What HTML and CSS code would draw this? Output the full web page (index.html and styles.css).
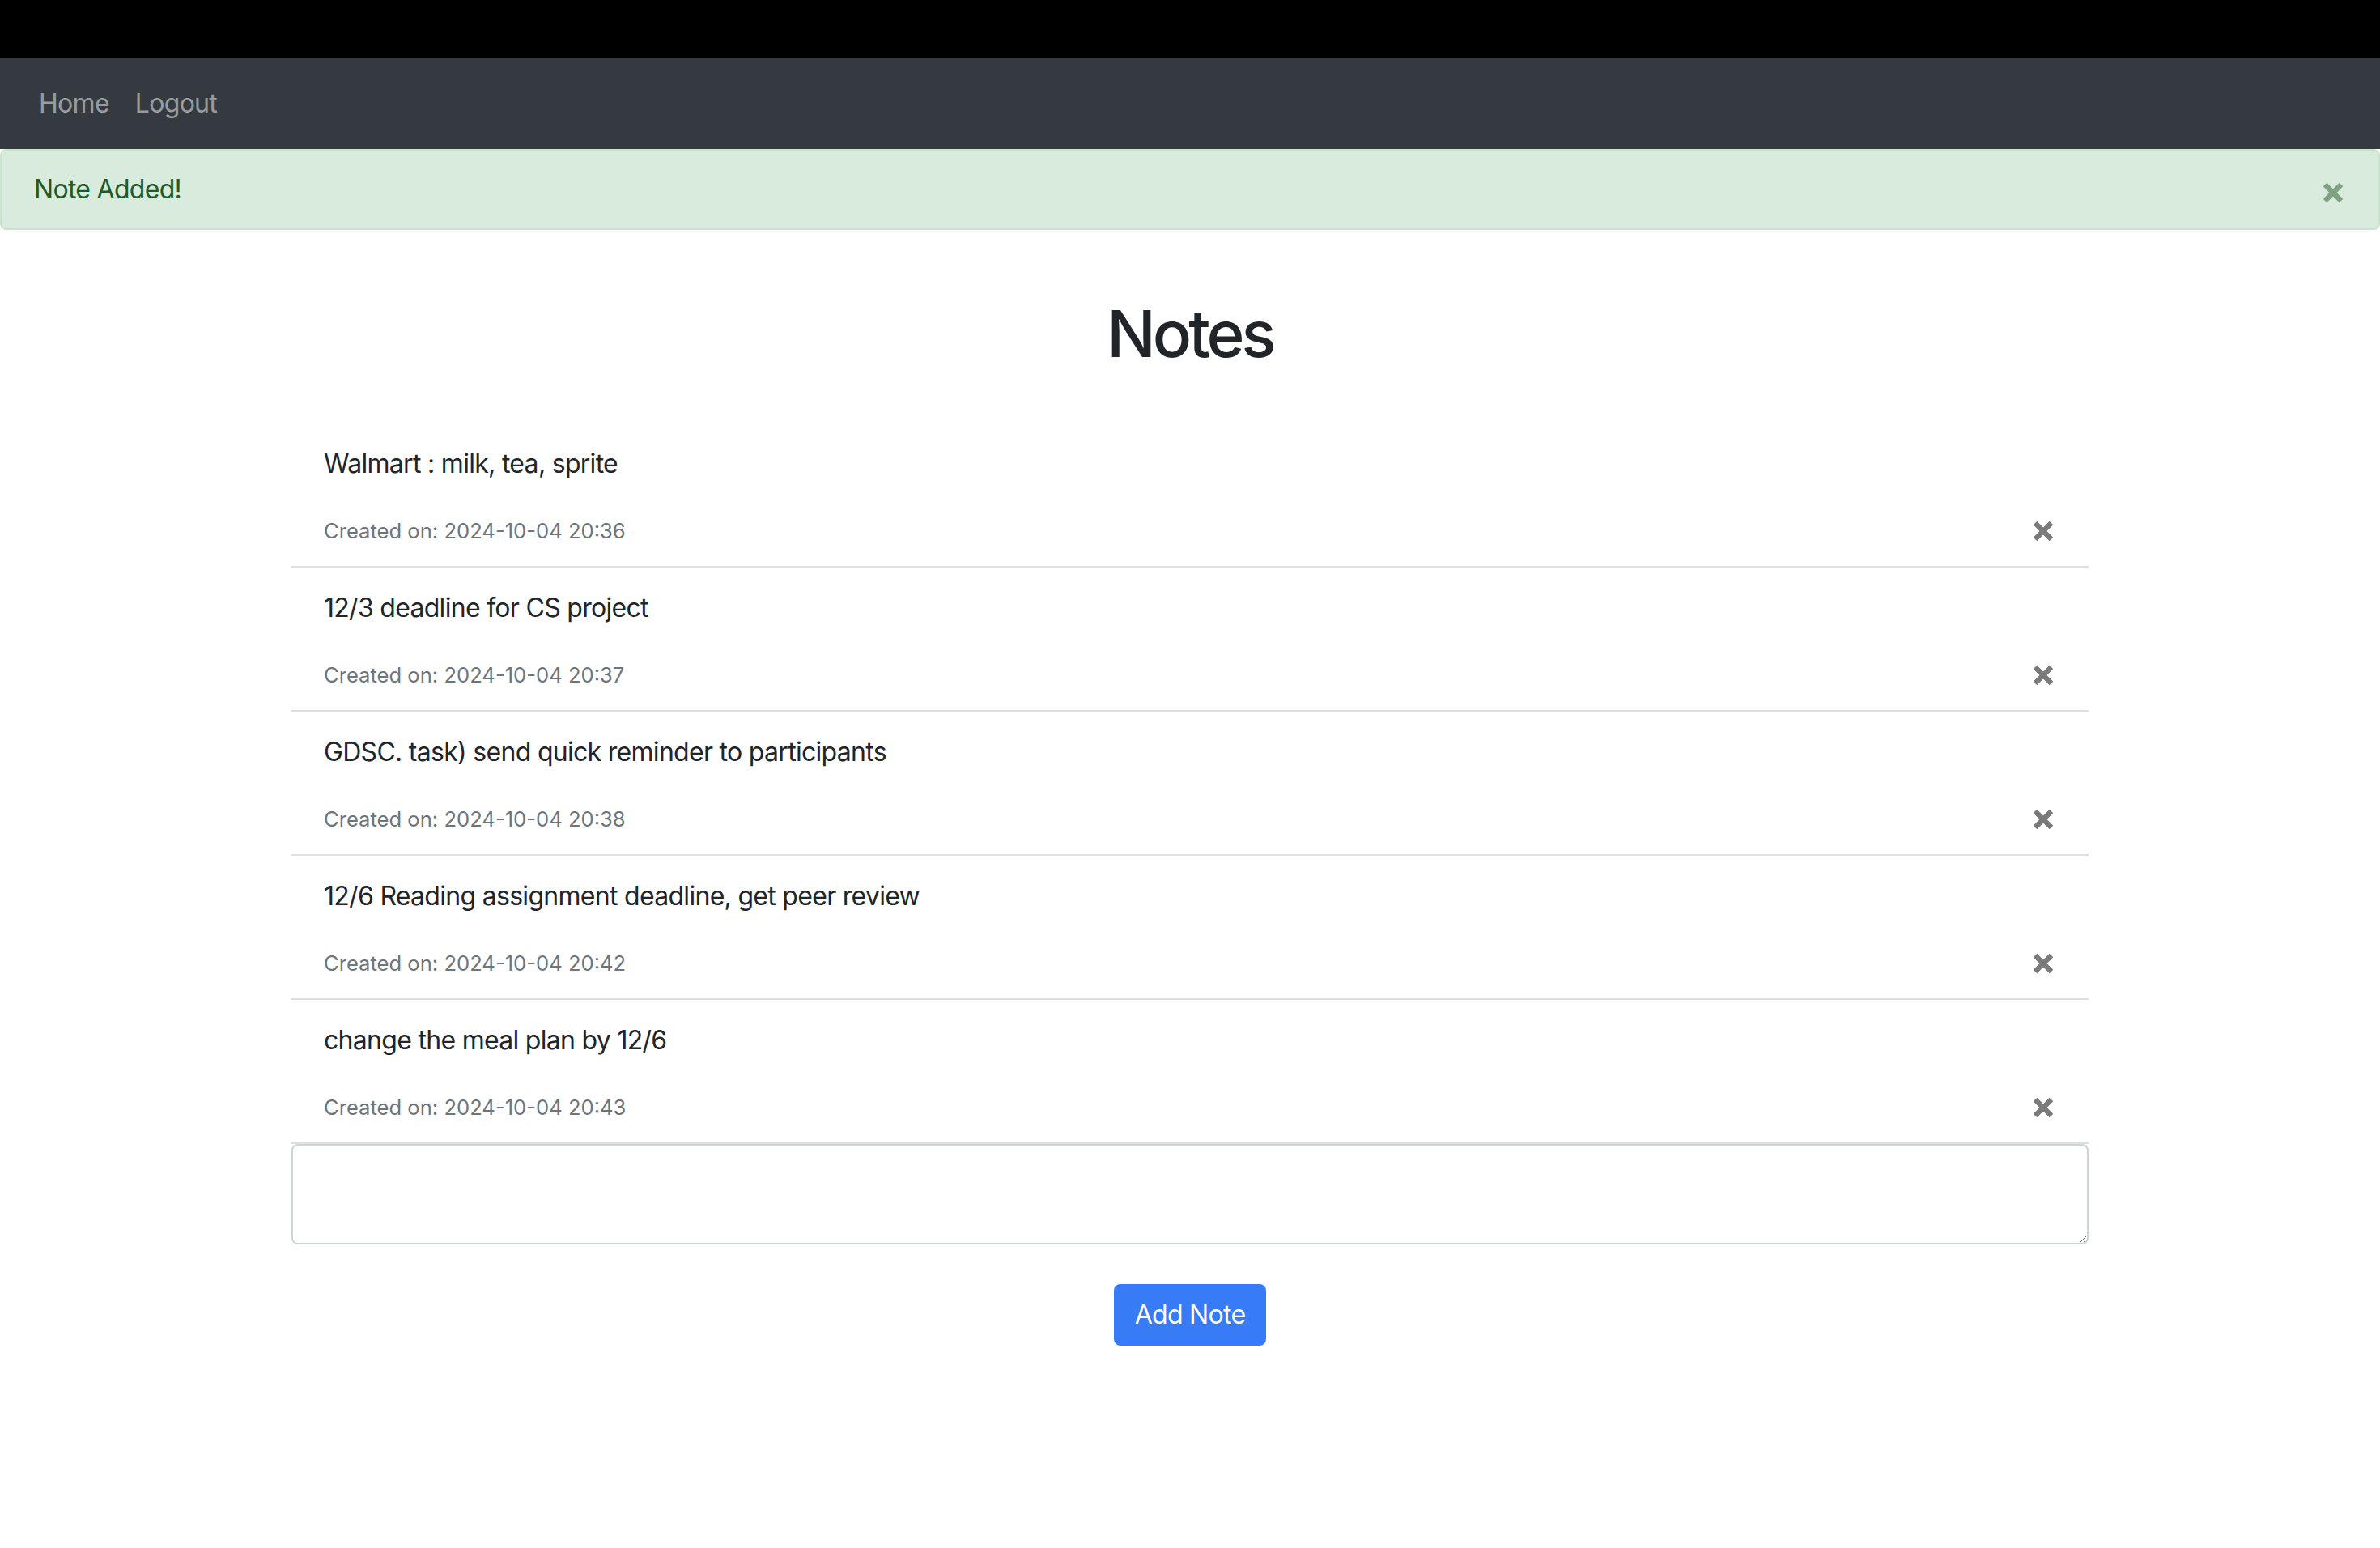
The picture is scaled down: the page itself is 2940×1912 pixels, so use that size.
FILE: index.html
```html
<!DOCTYPE html>
<html lang="en">
<head>
<meta charset="utf-8">
<title>Notes</title>
<link rel="stylesheet" href="styles.css">
</head>
<body>
<div class="topbar"></div>
<nav class="navbar">
  <a class="nav-link" href="#">Home</a>
  <a class="nav-link" href="#">Logout</a>
</nav>
<div class="alert">
  <span class="alert-text">Note Added!</span>
  <button class="close alert-close" type="button" aria-label="Close">
    <svg width="26" height="26" viewBox="0 0 26 26"><path d="M3 3 L23 23 M23 3 L3 23" stroke="currentColor" stroke-width="6.5" stroke-linecap="butt" fill="none"/></svg>
  </button>
</div>
<main class="container">
  <h1 class="title">Notes</h1>
  <ul class="notes">
    <li class="note">
      <div class="note-body"><div class="note-text">Walmart : milk, tea, sprite</div><small class="note-date">Created on: 2024-10-04 20:36</small></div>
      <button class="close" type="button" aria-label="Delete"><svg width="26" height="26" viewBox="0 0 26 26"><path d="M3 3 L23 23 M23 3 L3 23" stroke="currentColor" stroke-width="6.5" fill="none"/></svg></button>
    </li>
    <li class="note">
      <div class="note-body"><div class="note-text">12/3 deadline for CS project</div><small class="note-date">Created on: 2024-10-04 20:37</small></div>
      <button class="close" type="button" aria-label="Delete"><svg width="26" height="26" viewBox="0 0 26 26"><path d="M3 3 L23 23 M23 3 L3 23" stroke="currentColor" stroke-width="6.5" fill="none"/></svg></button>
    </li>
    <li class="note">
      <div class="note-body"><div class="note-text">GDSC. task) send quick reminder to participants</div><small class="note-date">Created on: 2024-10-04 20:38</small></div>
      <button class="close" type="button" aria-label="Delete"><svg width="26" height="26" viewBox="0 0 26 26"><path d="M3 3 L23 23 M23 3 L3 23" stroke="currentColor" stroke-width="6.5" fill="none"/></svg></button>
    </li>
    <li class="note">
      <div class="note-body"><div class="note-text">12/6 Reading assignment deadline, get peer review</div><small class="note-date">Created on: 2024-10-04 20:42</small></div>
      <button class="close" type="button" aria-label="Delete"><svg width="26" height="26" viewBox="0 0 26 26"><path d="M3 3 L23 23 M23 3 L3 23" stroke="currentColor" stroke-width="6.5" fill="none"/></svg></button>
    </li>
    <li class="note">
      <div class="note-body"><div class="note-text">change the meal plan by 12/6</div><small class="note-date">Created on: 2024-10-04 20:43</small></div>
      <button class="close" type="button" aria-label="Delete"><svg width="26" height="26" viewBox="0 0 26 26"><path d="M3 3 L23 23 M23 3 L3 23" stroke="currentColor" stroke-width="6.5" fill="none"/></svg></button>
    </li>
  </ul>
  <form class="add-form">
    <textarea class="note-input" rows="2"></textarea>
    <button class="btn-add" type="button">Add Note</button>
  </form>
</main>
</body>
</html>
```

FILE: styles.css
```css
* { box-sizing: border-box; }

body {
  margin: 0;
  font-family: Inter, "Liberation Sans", sans-serif;
  font-size: 32px;
  line-height: 1.5;
  letter-spacing: -0.022em;
  color: #212529;
  background: #fff;
}

.topbar {
  height: 72px;
  background: #000;
}

.navbar {
  height: 112px;
  background: #343a40;
  display: flex;
  align-items: center;
  padding: 0 32px;
}

.nav-link {
  color: rgba(255, 255, 255, 0.5);
  text-decoration: none;
  padding: 0 16px;
  line-height: 48px;
}

.alert {
  height: 100px;
  display: flex;
  align-items: center;
  justify-content: space-between;
  padding: 0 43px 0 40px;
  background: #d9ebdc;
  border: 2px solid #c9e3cd;
  border-radius: 8px;
  color: #1f5a2a;
}

.close {
  background: none;
  border: 0;
  padding: 0;
  margin: 0;
  width: 26px;
  height: 38px;
  display: flex;
  align-items: center;
  justify-content: center;
  color: #7a7a7a;
  cursor: pointer;
}

.alert-close {
  color: #7fa283;
  margin-top: 8px;
}

.container {
  width: 2220px;
  margin: 0 auto;
  padding-top: 80px;
}

.title {
  font-size: 80px;
  font-weight: 500;
  line-height: 96px;
  letter-spacing: -0.05em;
  margin: 0 0 63px;
  text-align: center;
}

.notes {
  list-style: none;
  margin: 0;
  padding: 0;
}

.note {
  height: 178px;
  display: flex;
  align-items: flex-end;
  justify-content: space-between;
  padding: 26px 43px 24px 40px;
  border-bottom: 2px solid #dfdfdf;
}

.note-text {
  line-height: 48px;
}

.note-date {
  display: block;
  margin-top: 40px;
  font-size: 25.6px;
  line-height: 38px;
  letter-spacing: 0;
  color: #6c757d;
}

.add-form {
  display: flex;
  flex-direction: column;
  align-items: center;
}

.note-input {
  display: block;
  width: 100%;
  height: 124px;
  border: 2px solid #ced4da;
  border-radius: 8px;
  padding: 12px 24px;
  font: inherit;
  letter-spacing: inherit;
  resize: vertical;
}

.btn-add {
  margin-top: 49px;
  height: 76px;
  padding: 12px 24px;
  font: inherit;
  letter-spacing: inherit;
  line-height: 48px;
  color: #fff;
  background: #377bf6;
  border: 2px solid #377bf6;
  border-radius: 8px;
  cursor: pointer;
}
```
